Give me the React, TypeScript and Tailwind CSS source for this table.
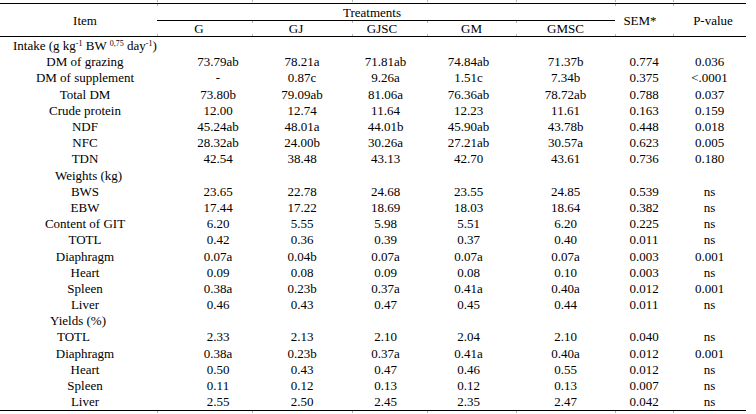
import React from "react";

const COLS = "grid grid-cols-[157px_95px_100px_75px_89px_99px_58px_73px]";

const dataCls = ["pl-[27px]", "", "pr-[8px]", "pr-[6px]", "", "", ""];

type Row =
  | { kind: "section"; label: React.ReactNode; cls: string }
  | { kind: "data"; label: string; cls?: string; v: string[] };

const rows: Row[] = [
  {
    kind: "section",
    label: (
      <>
        Intake (g kg<sup className="text-[8px]">-1</sup> BW <sup className="text-[8px]">0,75</sup> day
        <sup className="text-[8px]">-1</sup>)
      </>
    ),
    cls: "pl-[13px]",
  },
  { kind: "data", label: "DM of grazing", v: ["73.79ab", "78.21a", "71.81ab", "74.84ab", "71.37b", "0.774", "0.036"] },
  { kind: "data", label: "DM of supplement", v: ["-", "0.87c", "9.26a", "1.51c", "7.34b", "0.375", "<.0001"] },
  { kind: "data", label: "Total DM", v: ["73.80b", "79.09ab", "81.06a", "76.36ab", "78.72ab", "0.788", "0.037"] },
  { kind: "data", label: "Crude protein", v: ["12.00", "12.74", "11.64", "12.23", "11.61", "0.163", "0.159"] },
  { kind: "data", label: "NDF", v: ["45.24ab", "48.01a", "44.01b", "45.90ab", "43.78b", "0.448", "0.018"] },
  { kind: "data", label: "NFC", v: ["28.32ab", "24.00b", "30.26a", "27.21ab", "30.57a", "0.623", "0.005"] },
  { kind: "data", label: "TDN", v: ["42.54", "38.48", "43.13", "42.70", "43.61", "0.736", "0.180"] },
  { kind: "section", label: "Weights (kg)", cls: "pl-[55px]" },
  { kind: "data", label: "BWS", v: ["23.65", "22.78", "24.68", "23.55", "24.85", "0.539", "ns"] },
  { kind: "data", label: "EBW", v: ["17.44", "17.22", "18.69", "18.03", "18.64", "0.382", "ns"] },
  { kind: "data", label: "Content of GIT", v: ["6.20", "5.55", "5.98", "5.51", "6.20", "0.225", "ns"] },
  { kind: "data", label: "TOTL", v: ["0.42", "0.36", "0.39", "0.37", "0.40", "0.011", "ns"] },
  { kind: "data", label: "Diaphragm", v: ["0.07a", "0.04b", "0.07a", "0.07a", "0.07a", "0.003", "0.001"] },
  { kind: "data", label: "Heart", v: ["0.09", "0.08", "0.09", "0.08", "0.10", "0.003", "ns"] },
  { kind: "data", label: "Spleen", v: ["0.38a", "0.23b", "0.37a", "0.41a", "0.40a", "0.012", "0.001"] },
  { kind: "data", label: "Liver", v: ["0.46", "0.43", "0.47", "0.45", "0.44", "0.011", "ns"] },
  { kind: "section", label: "Yields (%)", cls: "pl-[50px]" },
  { kind: "data", label: "TOTL", cls: "text-left pl-[57px]", v: ["2.33", "2.13", "2.10", "2.04", "2.10", "0.040", "ns"] },
  { kind: "data", label: "Diaphragm", v: ["0.38a", "0.23b", "0.37a", "0.41a", "0.40a", "0.012", "0.001"] },
  { kind: "data", label: "Heart", v: ["0.50", "0.43", "0.47", "0.46", "0.55", "0.012", "ns"] },
  { kind: "data", label: "Spleen", v: ["0.11", "0.12", "0.13", "0.12", "0.13", "0.007", "ns"] },
  { kind: "data", label: "Liver", v: ["2.55", "2.50", "2.45", "2.35", "2.47", "0.042", "ns"] },
];

function TickRow() {
  return (
    <div className={`${COLS} h-[3px] items-start`}>
      {Array.from({ length: 8 }).map((_, i) => (
        <div key={i} className="h-full flex items-start">
          {i > 0 ? <div className="w-px h-[2px] bg-[#b5b5b5]" /> : null}
        </div>
      ))}
    </div>
  );
}

function Tick({ pos }: { pos: "top" | "bottom" }) {
  return (
    <span
      className={`absolute left-0 w-px h-[2px] bg-[#b5b5b5] ${pos === "top" ? "top-0" : "bottom-0"}`}
    />
  );
}

export default function App() {
  return (
    <div className="w-[756px] h-[414px] bg-white text-black text-[13px] overflow-hidden font-['Liberation_Serif','Times_New_Roman',serif]">
      <div className="w-[746px]">
        <TickRow />
        <div className="border-t border-black">
          <div className={`${COLS} grid-rows-[17px_15px] border-b border-black leading-[15px]`}>
            <div className="row-span-2 flex items-center justify-center pl-[13px] relative">
              Item
            </div>
            <div className="col-span-5 border-b border-black flex items-center justify-center pr-[28px] relative">
              <Tick pos="top" />
              Treatments
            </div>
            <div className="row-span-2 flex items-center justify-center pr-[8px] relative">
              <Tick pos="top" />
              <Tick pos="bottom" />
              SEM*
            </div>
            <div className="row-span-2 flex items-center justify-center pl-[7px] relative">
              <Tick pos="top" />
              <Tick pos="bottom" />
              P-value
            </div>
            <div className="flex items-center justify-center pr-[11px] relative">
              <Tick pos="bottom" />
              G
            </div>
            <div className="flex items-center justify-center pr-[12px] relative">
              <Tick pos="top" />
              <Tick pos="bottom" />
              GJ
            </div>
            <div className="flex items-center justify-center pr-[15px] relative">
              <Tick pos="top" />
              <Tick pos="bottom" />
              GJSC
            </div>
            <div className="flex items-center justify-center relative">
              <Tick pos="top" />
              <Tick pos="bottom" />
              GM
            </div>
            <div className="flex items-center justify-center relative">
              <Tick pos="top" />
              <Tick pos="bottom" />
              GMSC
            </div>
          </div>
        </div>
        <div className="pt-px border-b border-black">
          {rows.map((r, idx) =>
            r.kind === "section" ? (
              <div key={idx} className={`h-[16.2px] leading-[16px] whitespace-nowrap ${r.cls}`}>
                {r.label}
              </div>
            ) : (
              <div key={idx} className={`${COLS} h-[16.2px] leading-[16px] items-center whitespace-nowrap`}>
                <div className={r.cls ?? "text-center pl-[13px]"}>{r.label}</div>
                {r.v.map((val, i) => (
                  <div key={i} className={`text-center ${dataCls[i]}`}>
                    {val}
                  </div>
                ))}
              </div>
            )
          )}
        </div>
        <TickRow />
      </div>
    </div>
  );
}
